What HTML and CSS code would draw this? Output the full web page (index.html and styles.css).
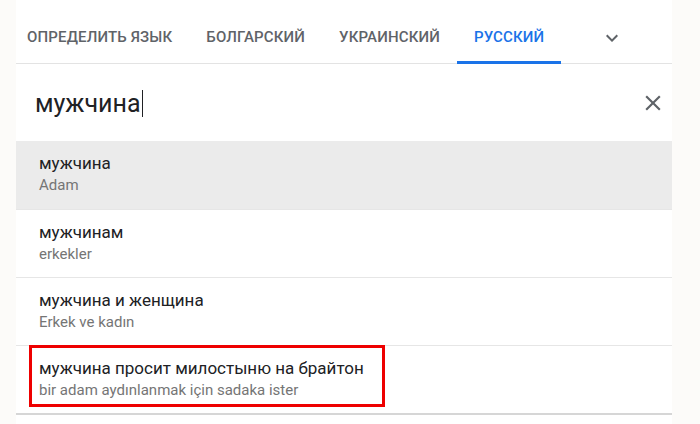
FILE: index.html
```html
<!DOCTYPE html>
<html lang="ru">
<head>
    <meta charset="UTF-8">
    <meta name="viewport" content="width=device-width, initial-scale=1.0">
    <title>Переводчик</title>
    <link rel="stylesheet" href="styles.css">
</head>
<body>
    <div class="panel">
        <div class="tabs">
            <div class="tab">Определить язык</div>
            <div class="tab">Болгарский</div>
            <div class="tab">Украинский</div>
            <div class="tab active">Русский</div>
            <div class="more">
                <svg width="24" height="24" viewBox="0 0 24 24"><path d="M7.41 8.59L12 13.17l4.59-4.58L18 10l-6 6-6-6 1.41-1.41z" fill="#5f6368"/></svg>
            </div>
        </div>
        <div class="input-row">
            <div class="query">мужчина<span class="caret"></span></div>
            <div class="clear">
                <svg width="26" height="26" viewBox="0 0 24 24"><path d="M19 6.41L17.59 5 12 10.59 6.41 5 5 6.41 10.59 12 5 17.59 6.41 19 12 13.41 17.59 19 19 17.59 13.41 12z" fill="#5f6368"/></svg>
            </div>
        </div>
        <div class="suggestions">
            <div class="item hover">
                <div class="src">мужчина</div>
                <div class="tr">Adam</div>
            </div>
            <div class="item">
                <div class="src">мужчинам</div>
                <div class="tr">erkekler</div>
            </div>
            <div class="item">
                <div class="src">мужчина и женщина</div>
                <div class="tr">Erkek ve kadın</div>
            </div>
            <div class="item">
                <div class="src">мужчина просит милостыню на брайтон</div>
                <div class="tr">bir adam aydınlanmak için sadaka ister</div>
            </div>
            <div class="highlight"></div>
        </div>
    </div>
</body>
</html>
```

FILE: styles.css
```css
body {
    margin: 0;
    background-color: #fcfbf9;
    font-family: Roboto, "Noto Sans", Arial, sans-serif;
    color: #202124;
}
.panel {
    width: 656px;
    margin-left: 16px;
    background: #fff;
    height: 424px;
}
.tabs {
    display: flex;
    align-items: stretch;
    height: 63px;
    border-bottom: 1px solid #e3e3e3;
}
.tab {
    display: flex;
    align-items: center;
    padding: 13px 17px 0;
    font-size: 15px;
    font-weight: 500;
    letter-spacing: 0.15px;
    text-transform: uppercase;
    color: #5f6368;
    border-bottom: 3px solid transparent;
    margin-bottom: -1px;
}
.tab:first-child {
    padding-left: 11px;
}
.tab.active {
    color: #1a73e8;
    border-bottom-color: #1a73e8;
}
.more {
    display: flex;
    align-items: center;
    justify-content: center;
    width: 40px;
    margin-left: 31px;
    padding-top: 13px;
}
.input-row {
    display: flex;
    align-items: center;
    justify-content: space-between;
    height: 77px;
    padding: 0 0 0 19px;
}
.query {
    font-size: 25px;
    color: #202124;
    display: flex;
    align-items: center;
    padding-top: 2px;
}
.caret {
    display: inline-block;
    width: 1px;
    height: 27px;
    background: #202124;
    margin-left: 1px;
}
.clear {
    width: 38px;
    height: 40px;
    display: flex;
    align-items: center;
    justify-content: center;
}
.suggestions {
    position: relative;
    border-bottom: 2px solid #d6d6d6;
}
.item {
    padding-left: 23px;
    padding-bottom: 2px;
    box-sizing: border-box;
    height: 68px;
    border-top: 1px solid #e6e6e6;
    display: flex;
    flex-direction: column;
    justify-content: center;
}
.item:first-child {
    border-top: none;
}
.item.hover {
    background: #ebebeb;
}
.src {
    font-size: 17px;
    line-height: 22px;
    color: #202124;
}
.tr {
    font-size: 15px;
    line-height: 22px;
    color: #757575;
}
.highlight {
    position: absolute;
    left: 13px;
    top: 204px;
    width: 350px;
    height: 56px;
    border: 3px solid #ee0000;
}
```
